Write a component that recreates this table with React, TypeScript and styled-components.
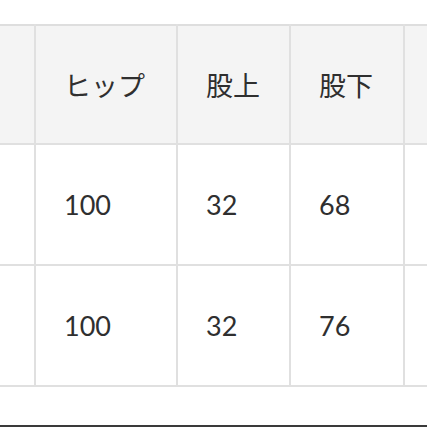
import styled, { createGlobalStyle } from "styled-components";

const GlobalStyle = createGlobalStyle`
  html, body {
    margin: 0;
    padding: 0;
    background: #ffffff;
  }
  body {
    font-family: Lato, "Noto Sans CJK JP", sans-serif;
    color: #2f2f2f;
  }
`;

const Page = styled.div`
  width: 427px;
  height: 427px;
  overflow: hidden;
  display: flex;
  flex-direction: column;
`;

const TableWrap = styled.div`
  padding-top: 24px;
  flex: 1;
  overflow: hidden;
`;

const Table = styled.table`
  border-collapse: collapse;
  table-layout: fixed;
  width: 560px;
  border-top: 2px solid #dedede;
`;

const Cell = styled.td<{ $head?: boolean }>`
  border: 2px solid #e0e0e0;
  border-top: none;
  background: ${({ $head }) => ($head ? "#f4f4f4" : "#ffffff")};
  height: ${({ $head }) => ($head ? "117px" : "119px")};
  padding: 0 0 0 28px;
  font-size: 27px;
  text-align: left;
  vertical-align: middle;
  white-space: nowrap;
  &:first-child {
    border-left: none;
  }
`;

const BottomBar = styled.div`
  height: 2px;
  background: #3a3a3a;
`;

const widths = [35, 142, 113, 114, 156];

const rows = [
  ["", "ヒップ", "股上", "股下", ""],
  ["", "100", "32", "68", ""],
  ["", "100", "32", "76", ""],
];

export default function App() {
  return (
    <Page>
      <GlobalStyle />
      <TableWrap>
        <Table>
          <colgroup>
            {widths.map((w, i) => (
              <col key={i} style={{ width: w }} />
            ))}
          </colgroup>
          <tbody>
            {rows.map((r, ri) => (
              <tr key={ri}>
                {r.map((c, ci) => (
                  <Cell key={ci} $head={ri === 0}>
                    {c}
                  </Cell>
                ))}
              </tr>
            ))}
          </tbody>
        </Table>
      </TableWrap>
      <BottomBar />
    </Page>
  );
}
